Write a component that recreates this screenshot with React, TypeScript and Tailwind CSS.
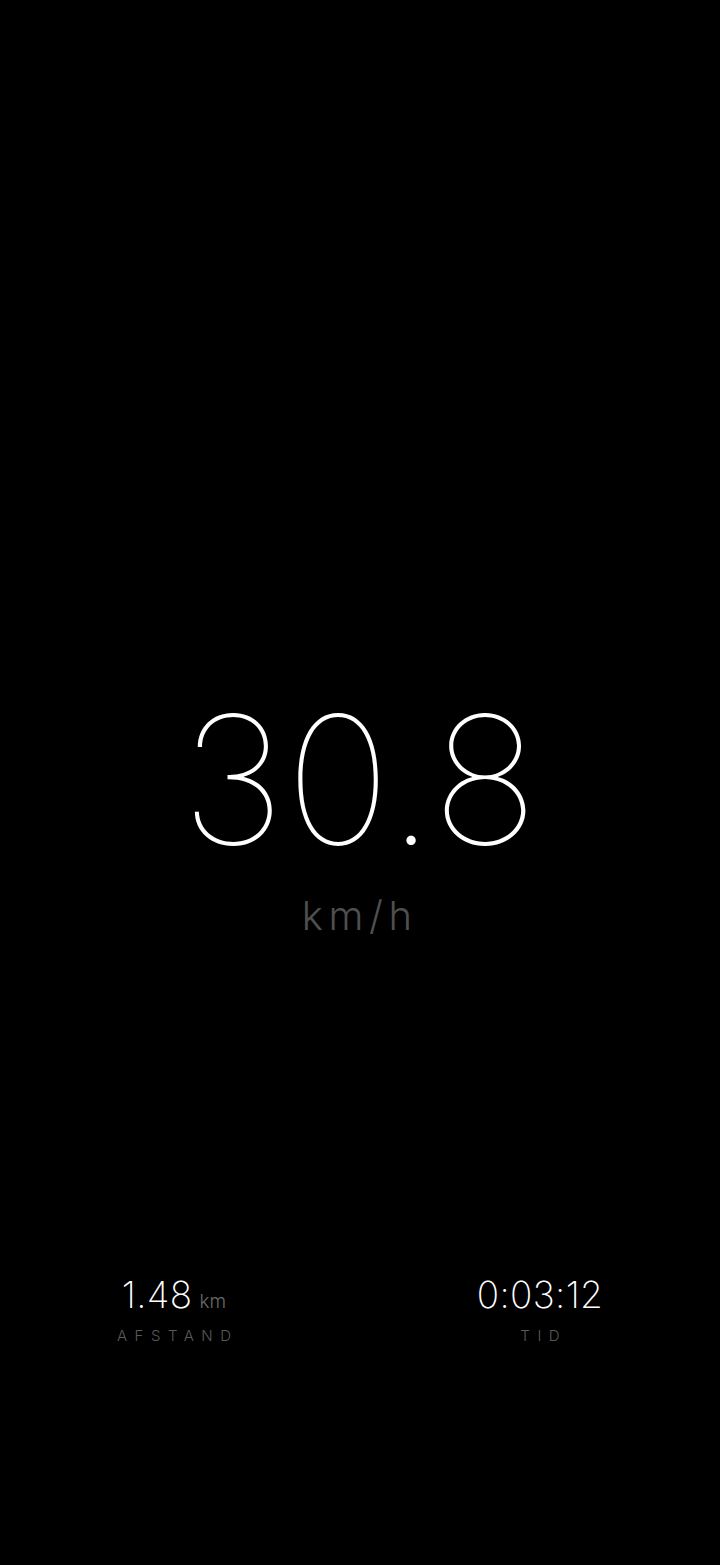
import React from 'react';

const font = { fontFamily: 'Inter, "Noto Sans", sans-serif' };

const Stat: React.FC<{ value: string; unit?: string; label: string; className?: string }> = ({ value, unit, label, className }) => (
  <div className={`flex flex-col items-center ${className ?? ''}`}>
    <div className="flex items-baseline text-white">
      <span className="text-[37px] font-extralight leading-none tracking-[0.01em]">{value}</span>
      {unit && <span className="ml-[7px] text-[19px] font-light leading-none text-[#6b6b6b]">{unit}</span>}
    </div>
    <div className="mt-[15px] pl-[0.5em] text-[15px] font-light leading-none tracking-[0.5em] text-[#5a5a5a]">
      {label}
    </div>
  </div>
);

export default function App() {
  return (
    <div className="flex h-[1565px] w-full flex-col bg-black" style={font}>
      <main className="flex flex-1 flex-col items-center justify-center pt-[350px]">
        <div className="text-[178px] font-thin leading-none tracking-[0.005em] text-white">30.8</div>
        <div className="mt-[27px] pr-[6px] pl-[0.14em] text-[40px] font-light leading-none tracking-[0.14em] text-[#4f4f4f]">
          km/h
        </div>
      </main>
      <section className="grid grid-cols-2 pb-[222px]">
        <Stat value="1.48" unit="km" label="AFSTAND" className="pr-3" />
        <Stat value="0:03:12" label="TID" />
      </section>
    </div>
  );
}
